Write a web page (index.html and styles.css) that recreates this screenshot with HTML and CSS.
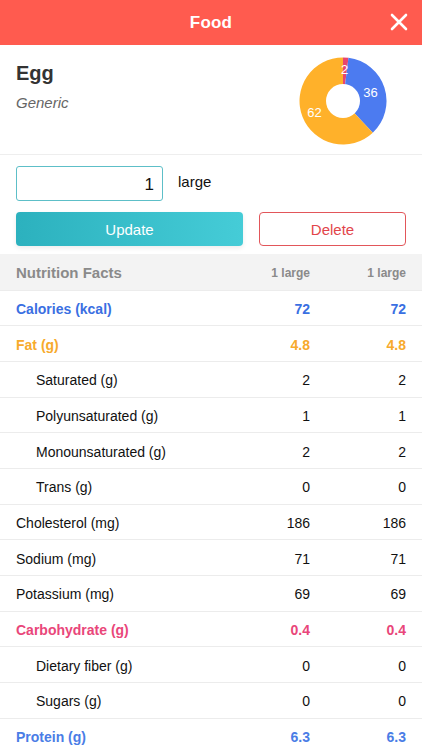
FILE: index.html
```html
<!DOCTYPE html>
<html>
<head>
<meta charset="utf-8">
<link rel="stylesheet" href="styles.css">
</head>
<body>
<header class="topbar">
  <span class="title">Food</span>
  <span class="close">
    <svg width="18" height="18" viewBox="0 0 18 18"><path d="M2 2L16 16M16 2L2 16" stroke="#fff" stroke-width="2.6" stroke-linecap="round"/></svg>
  </span>
</header>
<section class="food">
  <div class="food-info">
    <div class="name">Egg</div>
    <div class="brand">Generic</div>
  </div>
  <div class="pie">
    <svg width="88" height="88" viewBox="-44 -44 88 88">
      <path d="M0 -43.5 A43.5 43.5 0 0 1 5.45 -43.16 L0 0 Z" fill="#E9466E"/>
      <path d="M5.45 -43.16 A43.5 43.5 0 0 1 29.8 31.7 L0 0 Z" fill="#4C7BF0"/>
      <path d="M29.8 31.7 A43.5 43.5 0 1 1 0 -43.5 L0 0 Z" fill="#FFB12A"/>
      <circle cx="0" cy="0" r="17" fill="#fff"/>
      <text x="1.5" y="-27.5" class="pl">2</text>
      <text x="27.5" y="-4.5" class="pl">36</text>
      <text x="-28.5" y="15.5" class="pl">62</text>
    </svg>
  </div>
</section>
<section class="serving">
  <div class="qty-row">
    <div class="qty">1</div>
    <span class="unit">large</span>
  </div>
  <div class="btn-row">
    <button class="btn update">Update</button>
    <button class="btn delete">Delete</button>
  </div>
</section>
<div class="facts">
  <div class="row head"><span>Nutrition Facts</span><span class="v">1 large</span><span class="v">1 large</span></div>
  <div class="row bold blue"><span>Calories (kcal)</span><span class="v">72</span><span class="v">72</span></div>
  <div class="row bold orange"><span>Fat (g)</span><span class="v">4.8</span><span class="v">4.8</span></div>
  <div class="row sub"><span>Saturated (g)</span><span class="v">2</span><span class="v">2</span></div>
  <div class="row sub"><span>Polyunsaturated (g)</span><span class="v">1</span><span class="v">1</span></div>
  <div class="row sub"><span>Monounsaturated (g)</span><span class="v">2</span><span class="v">2</span></div>
  <div class="row sub"><span>Trans (g)</span><span class="v">0</span><span class="v">0</span></div>
  <div class="row"><span>Cholesterol (mg)</span><span class="v">186</span><span class="v">186</span></div>
  <div class="row"><span>Sodium (mg)</span><span class="v">71</span><span class="v">71</span></div>
  <div class="row"><span>Potassium (mg)</span><span class="v">69</span><span class="v">69</span></div>
  <div class="row bold pink"><span>Carbohydrate (g)</span><span class="v">0.4</span><span class="v">0.4</span></div>
  <div class="row sub"><span>Dietary fiber (g)</span><span class="v">0</span><span class="v">0</span></div>
  <div class="row sub"><span>Sugars (g)</span><span class="v">0</span><span class="v">0</span></div>
  <div class="row bold blue2"><span>Protein (g)</span><span class="v">6.3</span><span class="v">6.3</span></div>
</div>
</body>
</html>
```
FILE: styles.css
```css
* { box-sizing: border-box; }
html, body { margin: 0; padding: 0; background: #fff; }
body {
  font-family: "Liberation Sans", Arial, sans-serif;
  color: #111;
  width: 422px;
  overflow: hidden;
}
.topbar {
  height: 45px;
  background: #FF5B4F;
  display: flex;
  align-items: center;
  justify-content: center;
  position: relative;
}
.title { color: #fff; font-size: 17px; font-weight: bold; letter-spacing: 0.2px; }
.close { position: absolute; right: 14px; top: 13px; height: 18px; }
.food {
  height: 110px;
  border-bottom: 1px solid #eeeeee;
  display: flex;
  justify-content: space-between;
  padding: 0 35px 0 16px;
}
.food-info { padding-top: 16px; }
.name { font-size: 20px; font-weight: bold; color: #333; line-height: 24px; }
.brand { font-size: 15px; font-style: italic; color: #666; margin-top: 8px; line-height: 20px; }
.pie { padding-top: 12px; }
.pie svg { display: block; }
.pl { fill: #fff; font-size: 13px; font-family: "Liberation Sans", Arial, sans-serif; text-anchor: middle; }
.serving { padding: 11px 16px 8px; }
.qty-row { display: flex; align-items: center; }
.qty {
  width: 147px; height: 35px;
  border: 1px solid #5DBFC8;
  border-radius: 3px;
  text-align: right;
  font-size: 17px;
  padding: 6px 8px 0 0;
  line-height: 24px;
}
.unit { font-size: 15px; margin-left: 15px; margin-top: -4px; }
.btn-row { display: flex; gap: 16px; margin-top: 11px; }
.btn {
  height: 34px;
  border-radius: 4px;
  font-family: "Liberation Sans", Arial, sans-serif;
  font-size: 15px;
  padding: 0;
}
.update {
  width: 227px;
  border: none;
  color: #fff;
  background: linear-gradient(90deg, #2CB1BE, #45CCD7);
  box-shadow: 0 2px 5px rgba(0,0,0,0.08);
}
.delete {
  width: 147px;
  background: #fff;
  border: 1px solid #E2565A;
  color: #E2454A;
}
.row {
  display: grid;
  grid-template-columns: 1fr 96px 96px;
  align-items: center;
  height: 35.7px;
  border-bottom: 1px solid #ececec;
  padding: 2px 16px 0;
  font-size: 14px;
}
.row .v { text-align: right; }
.row.head {
  height: 36.5px;
  background: #f3f3f3;
  color: #8a8a8a;
  font-weight: bold;
  font-size: 15px;
}
.row.head .v { font-size: 12px; }
.row.sub span:first-child { padding-left: 20px; }
.bold { font-weight: bold; }
.blue { color: #3A6FE2; }
.blue2 { color: #4A7DE6; }
.orange { color: #F7AA2C; }
.pink { color: #E9467A; }
```
